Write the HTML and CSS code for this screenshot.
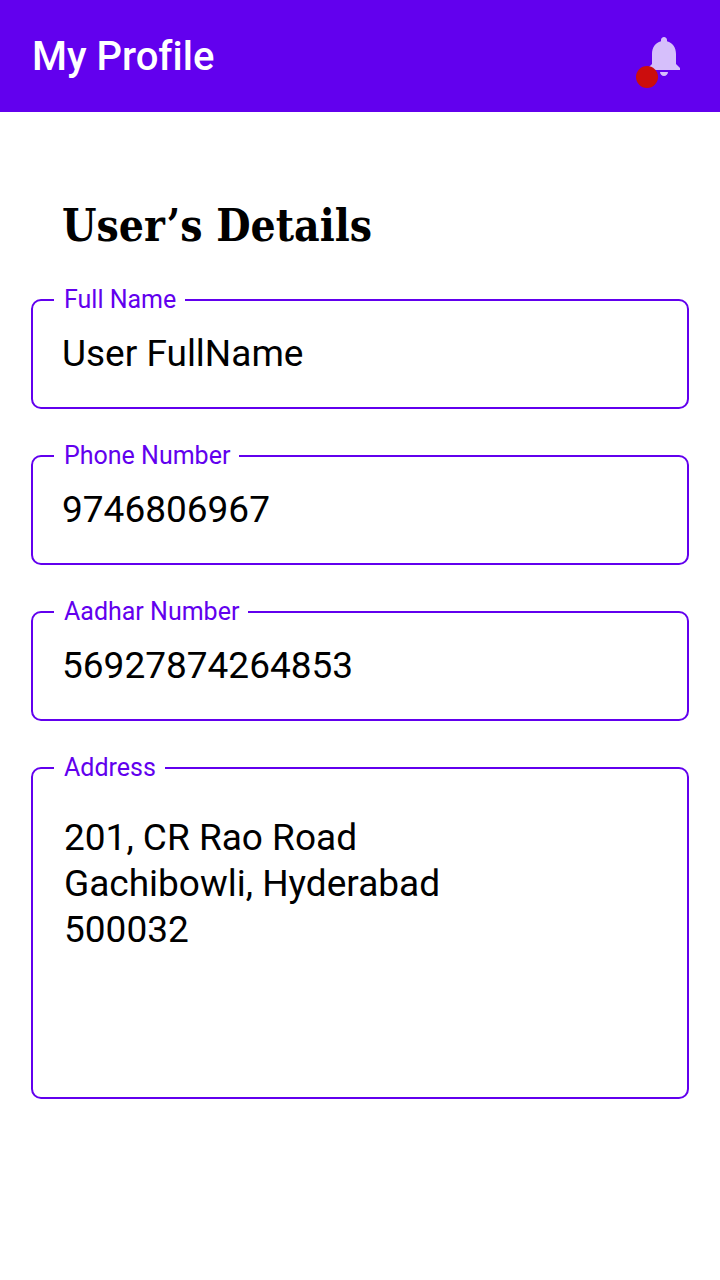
FILE: index.html
```html
<!DOCTYPE html>
<html lang="en">
<head>
<meta charset="utf-8">
<meta name="viewport" content="width=device-width, initial-scale=1">
<title>My Profile</title>
<link rel="stylesheet" href="styles.css">
</head>
<body>
<header class="app-bar">
  <h1 class="app-title">My Profile</h1>
  <button class="bell" type="button" aria-label="Notifications">
    <svg class="bell-icon" viewBox="0 0 24 24" aria-hidden="true"><path d="M12 22c1.1 0 2-.9 2-2h-4c0 1.1.89 2 2 2zm6-6v-5c0-3.07-1.64-5.64-4.5-6.32V4c0-.83-.67-1.5-1.5-1.5s-1.5.67-1.5 1.5v.68C7.63 5.36 6 7.92 6 11v5l-2 2v1h16v-1l-2-2z"/></svg>
    <span class="bell-dot"></span>
  </button>
</header>
<main class="content">
  <h2 class="section-title">User’s Details</h2>
  <form class="details">
    <fieldset class="field">
      <legend class="field-legend"><label for="name">Full Name</label></legend>
      <input class="field-input" id="name" type="text" value="User FullName">
    </fieldset>
    <fieldset class="field">
      <legend class="field-legend"><label for="phone">Phone Number</label></legend>
      <input class="field-input" id="phone" type="tel" value="9746806967">
    </fieldset>
    <fieldset class="field">
      <legend class="field-legend"><label for="aadhar">Aadhar Number</label></legend>
      <input class="field-input" id="aadhar" type="text" value="56927874264853">
    </fieldset>
    <fieldset class="field">
      <legend class="field-legend"><label for="address">Address</label></legend>
      <textarea class="field-input field-area" id="address" rows="6">201, CR Rao Road
Gachibowli, Hyderabad
500032</textarea>
    </fieldset>
  </form>
</main>
</body>
</html>
```
FILE: styles.css
```css
* {
  box-sizing: border-box;
}

body {
  margin: 0;
  background: #fff;
  color: #000;
  font-family: Roboto, "Liberation Sans", sans-serif;
}

.app-bar {
  display: flex;
  align-items: center;
  justify-content: space-between;
  padding: 32px;
  background: #6200ee;
  color: #fff;
}

.app-title {
  margin: 0;
  padding-top: 2px;
  font-size: 40px;
  font-weight: 500;
  font-variant-ligatures: none;
  line-height: 46px;
}

.bell {
  position: relative;
  padding: 0;
  border: 0;
  background: none;
}

.bell-icon {
  display: block;
  width: 48px;
  height: 48px;
  fill: #d6bffb;
}

.bell-dot {
  position: absolute;
  left: -4px;
  bottom: -8px;
  width: 22px;
  height: 22px;
  border-radius: 50%;
  background: #cc0d0d;
}

.content {
  padding: 82px 31px 32px;
}

.section-title {
  margin: 0 31px 28px;
  font-family: "Roboto Slab", "DejaVu Serif Condensed", "DejaVu Serif", serif;
  font-size: 44px;
  font-weight: 600;
  line-height: 64px;
}

.details {
  display: flex;
  flex-direction: column;
  gap: 33px;
}

.field {
  min-width: 0;
  margin: 0;
  padding: 0 0 14px;
  border: 2px solid #6200ee;
  border-radius: 10px;
}

.field-legend {
  margin-left: 21px;
  padding: 0 9px 0 10px;
  color: #6200ee;
  font-size: 25px;
  line-height: 28px;
}

.field-input {
  display: block;
  width: 100%;
  height: 79px;
  padding: 0 29px;
  border: 0;
  outline: 0;
  background: none;
  color: inherit;
  font-family: inherit;
  font-size: 37px;
  line-height: 46px;
}

.field-area {
  height: 301px;
  padding: 33px 31px 0;
  resize: none;
}
```
